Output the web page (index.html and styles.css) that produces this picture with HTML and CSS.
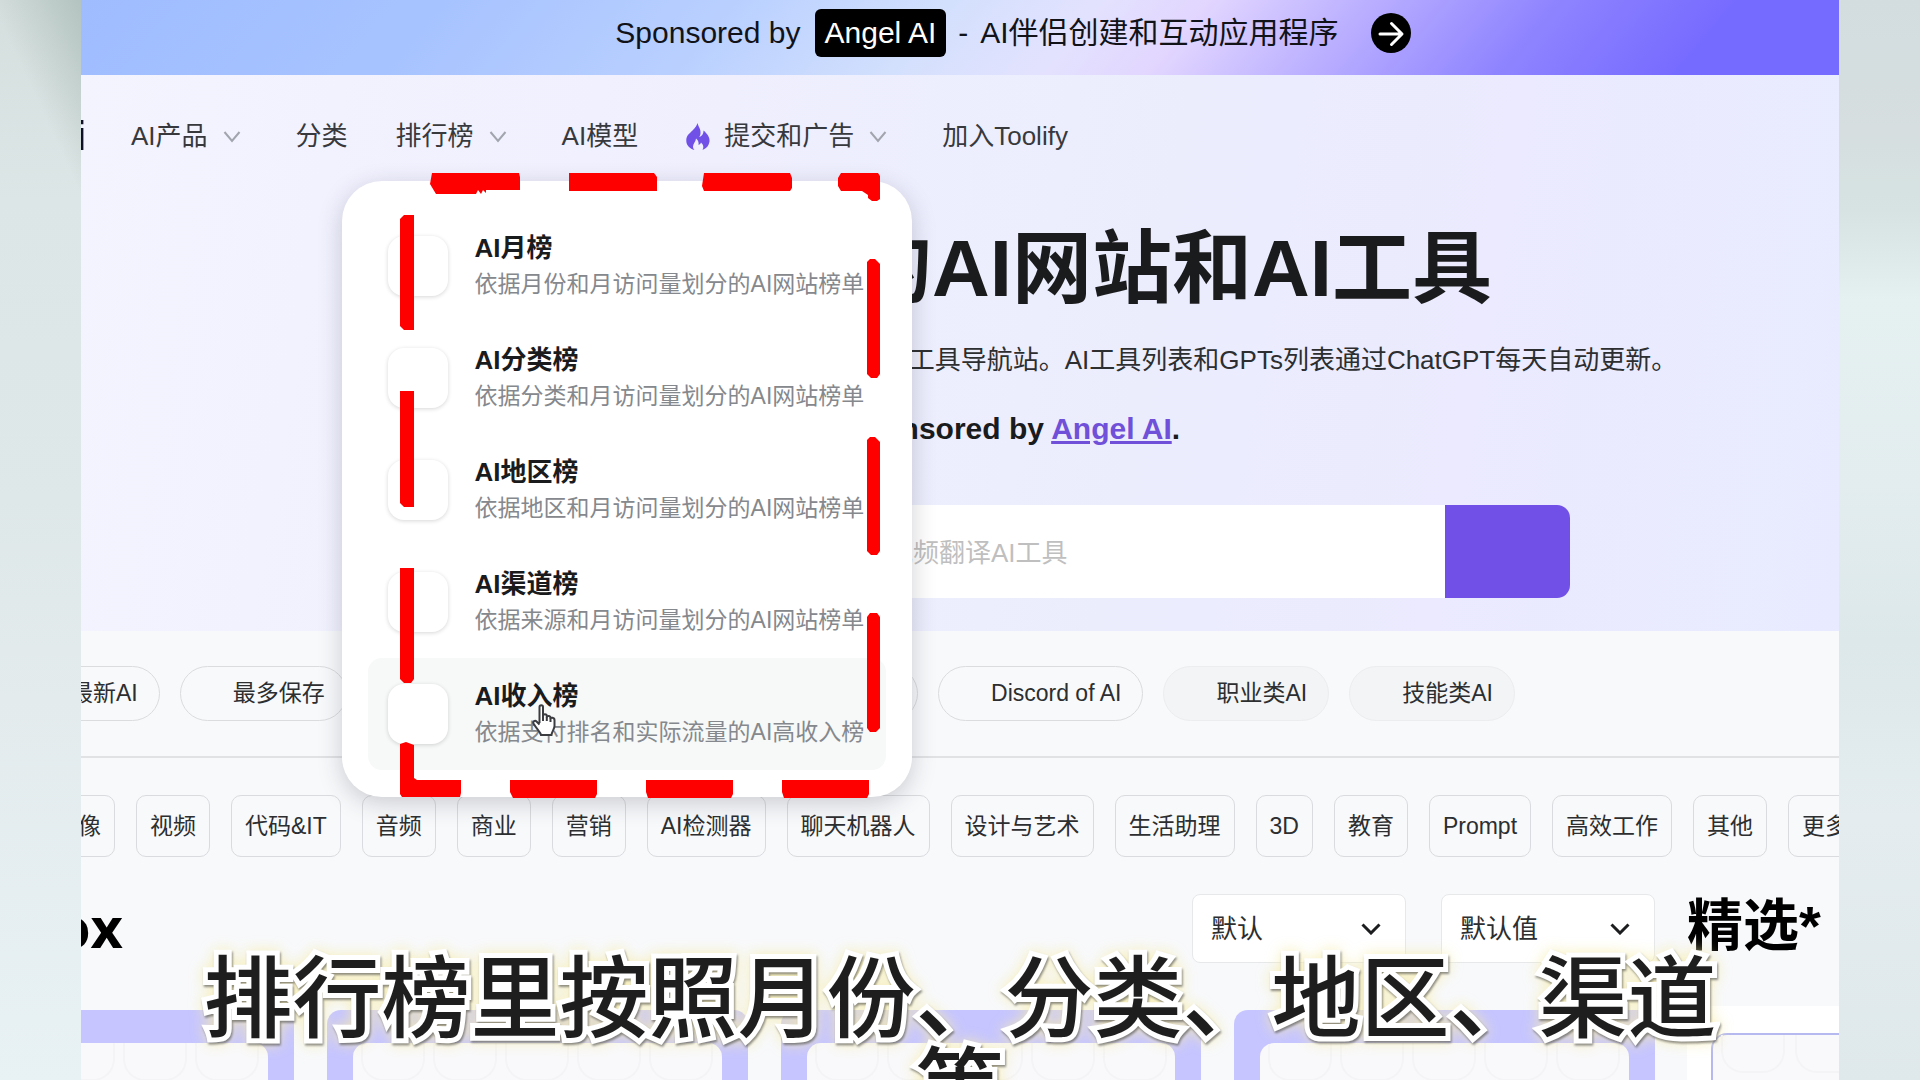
FILE: index.html
```html
<!DOCTYPE html>
<html lang="zh-CN">
<head>
<meta charset="utf-8">
<meta name="viewport" content="width=device-width, initial-scale=1">
<title>Toolify AI 排行榜</title>
<link rel="stylesheet" href="styles.css">
</head>
<body>
<div class="stage">
  <div class="frame">
    <div class="banner">
      <span>Sponsored by</span>
      <a class="banner-brand" href="#">Angel AI</a>
      <span class="banner-dash">-</span>
      <span>AI伴侣创建和互动应用程序</span>
      <a class="banner-go" href="#" aria-label="前往">
        <svg viewBox="0 0 40 40" width="40" height="40"><circle cx="20" cy="20" r="20"/><path d="M9 21H30M20.500 10.500L31 21L20.500 31.500"/></svg>
      </a>
    </div>

    <header class="hero">
      <nav class="nav">
        <span class="logo"><a href="#">Toolify.ai</a></span>
        <ul class="menu">
          <li><a href="#">AI产品</a><svg class="chevron" viewBox="0 0 32 32"><path d="M8.500 12L16 21L23.500 12"/></svg></li>
          <li><a href="#">分类</a></li>
          <li class="has-panel"><a href="#">排行榜</a><svg class="chevron" viewBox="0 0 32 32"><path d="M8.500 12L16 21L23.500 12"/></svg>
            <div class="panel">
              <a class="entry" href="#"><span class="entry-icon"></span><span class="entry-text"><strong>AI月榜</strong><span>依据月份和月访问量划分的AI网站榜单</span></span></a>
              <a class="entry" href="#"><span class="entry-icon"></span><span class="entry-text"><strong>AI分类榜</strong><span>依据分类和月访问量划分的AI网站榜单</span></span></a>
              <a class="entry" href="#"><span class="entry-icon"></span><span class="entry-text"><strong>AI地区榜</strong><span>依据地区和月访问量划分的AI网站榜单</span></span></a>
              <a class="entry" href="#"><span class="entry-icon"></span><span class="entry-text"><strong>AI渠道榜</strong><span>依据来源和月访问量划分的AI网站榜单</span></span></a>
              <a class="entry entry-active" href="#"><span class="entry-icon"></span><span class="entry-text"><strong>AI收入榜</strong><span>依据支付排名和实际流量的AI高收入榜</span></span></a>
            </div>
          </li>
          <li><a href="#">AI模型</a></li>
          <li><svg class="flame" viewBox="0 0 24 27"><path d="M11.500 0C12.500 4 15 6 14.500 10.500C14.400 12 13.800 13 13.200 14C15.500 13.500 17.500 11 17.600 7.500C21.500 11 24 14.500 23.500 18.500C23 22.500 20.500 25.500 16.500 27C18 24.500 17.500 21.500 15 19.500C14.500 21 13.500 21.500 12.500 22C13 19 12 17 10 15.500C10 18.500 7 20.500 7 23.500C7 25 7.500 26 8.500 27C4 25.800 0.500 22.500 0.300 18C0 12.500 3.500 10.500 6.500 7.500C8.800 5.200 10.800 3 11.500 0Z"/></svg><a href="#">提交和广告</a><svg class="chevron" viewBox="0 0 32 32"><path d="M8.500 12L16 21L23.500 12"/></svg></li>
          <li><a href="#">加入Toolify</a></li>
        </ul>
      </nav>
      <div class="hero-body">
        <h1>发现最好的AI网站和AI工具</h1>
        <p class="lead">25908个AI工具和459 个分类，收录全球最好的AI工具导航站。AI工具列表和GPTs列表通过ChatGPT每天自动更新。</p>
        <p class="credit">Sponsored by <a href="#">Angel AI</a>.</p>
        <form class="search">
          <input type="search" aria-label="搜索AI工具" placeholder="输入关键词进行搜索，例如：视频翻译AI工具">
          <button type="button" aria-label="搜索"></button>
        </form>
      </div>
    </header>

    <div class="pills">
      <a href="#">最新AI</a>
      <a href="#">最多保存</a>
      <a href="#">最多使用</a>
      <a href="#">浏览器插件</a>
      <a href="#">AI Apps</a>
      <a href="#">Discord of AI</a>
      <a class="soft" href="#">职业类AI</a>
      <a class="soft" href="#">技能类AI</a>
    </div>

    <div class="tags">
      <a href="#">图像</a>
      <a href="#">视频</a>
      <a href="#">代码&amp;IT</a>
      <a href="#">音频</a>
      <a href="#">商业</a>
      <a href="#">营销</a>
      <a href="#">AI检测器</a>
      <a href="#">聊天机器人</a>
      <a href="#">设计与艺术</a>
      <a href="#">生活助理</a>
      <a href="#">3D</a>
      <a href="#">教育</a>
      <a href="#">Prompt</a>
      <a href="#">高效工作</a>
      <a href="#">其他</a>
      <a href="#">更多</a>
    </div>

    <div class="columns">
      <main class="results">
        <div class="toolbar">
          <h2 class="box-title"><span>Toolbox</span></h2>
          <div class="picker">
            <select aria-label="排序"><option>默认</option></select>
            <svg viewBox="0 0 20 12"><path d="M1.500 1.500L10 10L18.500 1.500"/></svg>
          </div>
          <div class="picker">
            <select aria-label="筛选"><option>默认值</option></select>
            <svg viewBox="0 0 20 12"><path d="M1.500 1.500L10 10L18.500 1.500"/></svg>
          </div>
        </div>
        <div class="cards">
          <div class="card"><div class="thumb"><i></i><i></i><i></i><i></i><i></i></div></div>
          <div class="card"><div class="thumb"><i></i><i></i><i></i><i></i><i></i></div></div>
          <div class="card"><div class="thumb"><i></i><i></i><i></i><i></i><i></i></div></div>
          <div class="card"><div class="thumb"><i></i><i></i><i></i><i></i><i></i></div></div>
        </div>
      </main>
      <aside class="featured">
        <h2>精选*</h2>
        <div class="featured-list"><div class="featured-card"><i></i><i></i></div></div>
      </aside>
    </div>
  </div>

  <svg class="marker" viewBox="0 0 500 640" width="500" height="640" aria-hidden="true">
    <path d="M42 13H129L130 17V30H96V33L93 30L91 34L88 30L86 34H46L40 24Z"/>
    <path d="M179 13H264L267 17V31H179Z"/>
    <path d="M314 13H400L402 18V28L400 31H314L312 26Z"/>
    <path d="M451 13H488L490 16V39L487 41H482L478 38V35L472 31H451L448 26V18Z"/>
    <path d="M14 55H24V170H14L10 166V59Z"/>
    <path d="M10 231H24V347H14L10 343Z"/>
    <path d="M10 408H24V519L21 523H14L10 519Z"/>
    <path d="M10 584L16 582L24 585V618L27 620H71V633L70 637H12L10 634Z"/>
    <path d="M477 102L480 99H485L490 104V214L487 218H481L477 214Z"/>
    <path d="M477 280L480 277H485L490 282V391L487 395H481L477 391Z"/>
    <path d="M477 457L480 453H487L490 457V568L486 572H480L477 568Z"/>
    <path d="M120 620H207V634L205 638H123L120 632Z"/>
    <path d="M256 620H343V634L341 638H258L256 632Z"/>
    <path d="M392 620H479V634L477 638H394L392 632Z"/>
  </svg>

  <svg class="pointer" viewBox="0 0 25 33" width="25" height="33" aria-hidden="true">
    <path d="M7.500 19V3C7.500 0.500 11 0.500 11 3V12C11 9.800 14.800 9.800 14.800 12V13.500C14.800 11.300 18.500 11.500 18.500 14V15C18.500 13 22.500 13.300 22.500 16V22C22.500 25 20 27 19.500 31H9C8.500 28 5 25.500 1.500 19.500C0.500 17.500 3 16 4.500 17.500L7.500 20.500"/>
    <path d="M11 12V17M14.800 13V17M18.500 14.500V18"/>
  </svg>

  <p class="caption">排行榜里按照月份、分类、地区、渠道等</p>
</div>
</body>
</html>
```

FILE: styles.css
```css
* { box-sizing: border-box; }

body {
  margin: 0;
  height: 100vh;
  overflow: hidden;
  font-family: "Liberation Sans", "Noto Sans CJK SC", sans-serif;
  font-size: 26px;
  color: #2c2e30;
}

a { color: inherit; text-decoration: none; }
h1, h2, p, ul { margin: 0; padding: 0; }

.stage {
  position: relative;
  height: 100vh;
  overflow: hidden;
  padding: 0 81px;
  background:
    linear-gradient(65deg, #dfe7e700 55%, #b3c3bf 100%) 0 0 / 81px 260px no-repeat,
    linear-gradient(180deg, #d3dddf 0, #d6dedf 130px, #d6e3e2 210px, #e5f0f1 300px, #e3edef 480px, #dde8eb 640px, #e4ecef 820px, #dfe8eb 100%) 100% 0 / 81px 100% no-repeat,
    linear-gradient(180deg, #d5dfde 0, #dde6e6 200px, #dfe8e8 500px, #e3ebed 700px, #e8f1f4 100%);
}

.frame {
  position: relative;
  height: 100vh;
  overflow: hidden;
  background: #f8f9fb;
}

/* sponsor strip */
.banner {
  display: flex;
  align-items: center;
  justify-content: center;
  height: 75px;
  padding: 0 0 10px 106px;
  font-size: 30px;
  line-height: 48px;
  color: #111318;
  white-space: nowrap;
  background: linear-gradient(130deg, #9fbcff 0, #a7c3ff 20%, #b9d0ff 36%, #d3e0fd 48%, #e3e2fe 56%, #e2d6ff 62%, #b9aeff 71%, #8f84ff 81%, #766bff 91%, #766bff 100%);
}
.banner-brand {
  margin: 0 12px 0 14px;
  padding: 0 10px;
  border-radius: 6px;
  background: #000;
  color: #fff;
}
.banner-dash { margin-right: 12px; }
.banner-go { display: flex; margin-left: 32px; }
.banner-go path { fill: none; stroke: #fff; stroke-width: 3; stroke-linecap: round; stroke-linejoin: round; }

/* hero */
.hero { background: linear-gradient(100deg, #f4f4ff 0, #efeffe 35%, #ebedfd 60%, #ebeafe 78%, #e8ebff 100%); }
.nav {
  display: flex;
  align-items: center;
  height: 122px;
  line-height: 40px;
  color: #37393d;
}
.logo {
  display: flex;
  justify-content: flex-end;
  flex: 0 0 5px;
  overflow: hidden;
  font-size: 40px;
  font-weight: 700;
  color: #111;
}
.menu {
  display: flex;
  align-items: center;
  gap: 48px;
  margin-left: 45px;
  list-style: none;
  white-space: nowrap;
}
.menu li { display: flex; align-items: center; }
.chevron { width: 32px; height: 32px; margin-left: 8px; fill: none; stroke: #a2a5ad; stroke-width: 2; }
.flame { width: 24px; height: 27px; margin-right: 14px; fill: #7050e6; }
.has-panel { position: relative; }

/* ranking menu */
.panel {
  position: absolute;
  z-index: 5;
  top: 65px;
  left: -54px;
  width: 570px;
  padding: 29px 26px 27px;
  border-radius: 40px;
  background: #fff;
  box-shadow: 0 6px 24px rgba(40, 44, 60, .22);
}
.entry {
  display: flex;
  align-items: center;
  gap: 27px;
  height: 112px;
  padding: 0 20px;
  border-radius: 14px;
}
.entry-active { background: #f7f8f8; }
.entry-icon {
  flex: 0 0 60px;
  height: 60px;
  border-radius: 16px;
  background: #fff;
  box-shadow: 0 1px 4px rgba(0, 0, 0, .16);
}
.entry-text { display: grid; font-size: 23px; line-height: 36px; color: #85888d; }
.entry-text strong { font-size: 26px; color: #1a1b1c; }

.hero-body {
  display: flex;
  flex-direction: column;
  align-items: center;
  padding: 25px 0 33px 104px;
  white-space: nowrap;
}
h1 { font-size: 80px; line-height: 94px; color: #1a1b1c; }
.lead { margin-top: 24px; line-height: 40px; }
.credit { margin-top: 29px; font-size: 30px; font-weight: 700; line-height: 40px; color: #1a1b1c; }
.credit a { color: #7050d8; text-decoration: underline; }
.search {
  display: flex;
  width: 1116px;
  height: 93px;
  margin-top: 56px;
  border-radius: 13px;
  overflow: hidden;
}
.search input {
  flex: 1;
  border: 0;
  padding: 4px 24px 0 95px;
  font: inherit;
  background: #fff;
}
.search input::placeholder { color: #bfbfbf; }
.search button { width: 125px; border: 0; background: #7050e6; }

/* quick filters */
.pills {
  display: flex;
  gap: 20px;
  padding: 35px 0;
  border-bottom: 2px solid #e0e2e4;
  font-size: 23px;
  white-space: nowrap;
}
.pills a {
  flex: none;
  padding: 0 21px 0 52px;
  line-height: 53px;
  border: 1px solid #dadcde;
  border-radius: 28px;
}
.pills a:first-child { margin-left: -64px; }
.pills .soft { background: #f3f4f5; border-color: #ebedee; }

.tags {
  display: flex;
  gap: 21px;
  padding: 37px 0;
  font-size: 23px;
  white-space: nowrap;
}
.tags a {
  flex: none;
  padding: 0 13px;
  line-height: 60px;
  border: 1px solid #d9dbde;
  border-radius: 10px;
}
.tags a:first-child { margin-left: -40px; }

/* listing */
.columns { display: grid; grid-template-columns: minmax(0, 1fr) 152px; gap: 32px; }
.toolbar { display: flex; gap: 35px; height: 69px; }
.box-title {
  display: flex;
  align-items: center;
  justify-content: flex-end;
  width: 42px;
  margin-right: auto;
  overflow: hidden;
  font-family: "Open Sans", sans-serif;
  font-size: 56px;
  line-height: 64px;
  height: 64px;
  color: #000;
}
.picker { position: relative; width: 214px; }
.picker select {
  appearance: none;
  width: 100%;
  height: 100%;
  padding: 0 18px;
  border: 1px solid #e6e8ea;
  border-radius: 8px;
  background: #fff;
  font: inherit;
  color: inherit;
}
.picker svg {
  position: absolute;
  top: 29px;
  right: 25px;
  width: 20px;
  height: 12px;
  fill: none;
  stroke: #1c1d1f;
  stroke-width: 3;
  pointer-events: none;
}
.cards {
  display: grid;
  grid-template-columns: repeat(4, 1fr);
  gap: 33px;
  margin: 47px 0 0 -208px;
}
.card { padding: 33px 26px; border-radius: 14px; background: #c6c5ff; }
.thumb {
  display: flex;
  gap: 8px;
  height: 240px;
  padding-left: 8px;
  border-radius: 14px;
  overflow: hidden;
  background: #f9f9fb;
}
.thumb i, .featured-card i { flex: 0 0 64px; height: 38px; border: 2px solid #f4f4f6; border-top: 0; border-radius: 0 0 22px 22px; }

.featured h2 { font-size: 56px; line-height: 64px; white-space: nowrap; color: #000; }
.featured-list { margin-top: 48px; padding: 27px 0 0 24px; background: #fff; overflow: hidden; }
.featured-card {
  display: flex;
  gap: 10px;
  width: 360px;
  height: 240px;
  padding-left: 8px;
  border: 2px solid #b5b9ef;
  border-radius: 16px;
  background: #f9f9fb;
}

/* annotation layer */
.marker { position: absolute; z-index: 6; left: 390px; top: 160px; fill: #f00; }
.pointer { position: absolute; z-index: 7; left: 532px; top: 704px; fill: #fff; stroke: #3a3c40; stroke-width: 2; }
.pointer path + path { fill: none; }
.caption {
  position: absolute;
  z-index: 8;
  top: 946px;
  left: 50%;
  width: 1520px;
  margin-left: -760px;
  font-family: "Noto Sans CJK SC", sans-serif;
  font-size: 89px;
  font-weight: 500;
  line-height: 91px;
  text-align: center;
  color: #1e1e1e;
  -webkit-text-stroke: 10px #fff;
  paint-order: stroke fill;
  filter: drop-shadow(1px 2px 1px rgba(70, 70, 70, .6)) drop-shadow(0 0 7px rgba(246, 236, 170, .8));
}
```
